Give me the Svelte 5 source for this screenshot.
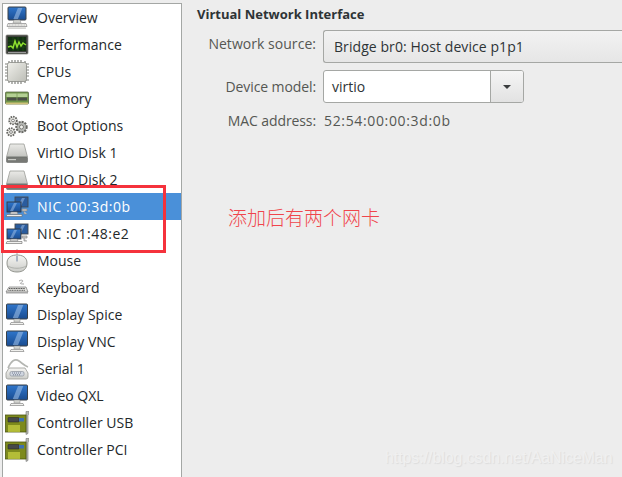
<script>
  const items = [
    ['Overview', 'overview'], ['Performance', 'perf'], ['CPUs', 'cpu'], ['Memory', 'mem'],
    ['Boot Options', 'gears'], ['VirtIO Disk 1', 'disk'], ['VirtIO Disk 2', 'disk'],
    ['NIC :00:3d:0b', 'nic'], ['NIC :01:48:e2', 'nic'], ['Mouse', 'mouse'], ['Keyboard', 'kbd'],
    ['Display Spice', 'display'], ['Display VNC', 'display'], ['Serial 1', 'serial'],
    ['Video QXL', 'display'], ['Controller USB', 'card'], ['Controller PCI', 'card']
  ];
</script>

{#snippet screen(x, y, w, h)}
  <rect x={x} y={y} width={w} height={h} rx="1" fill="url(#scr)" stroke="#3a4046" stroke-width="1"/>
  <path d="M{x + w * 0.3} {y + h - 1} L{x + w * 0.55} {y + 1} H{x + w * 0.8} L{x + w * 0.55} {y + h - 1} Z" fill="#a6c4ea" opacity="0.55"/>
{/snippet}

{#snippet icon(kind)}
  <svg class="ico" viewBox="0 0 24 24" width="24" height="24">
    {#if kind === 'overview'}
      {@render screen(3, 1, 18, 13)}
      <path d="M9 14h6l1 3H8z" fill="#d4d5d1" stroke="#888" stroke-width=".5"/>
      <path d="M3 17.5h18l1 3H2z" fill="#eeeeeb" stroke="#777" stroke-width=".6"/>
      <path d="M4 19h16" stroke="#888" stroke-width=".5" stroke-dasharray="1 .5"/>
      <rect x="3" y="21.5" width="18" height="1.2" fill="#c4c4c0"/>
    {:else if kind === 'perf'}
      <rect x="1" y="2" width="22" height="19" rx="1" fill="#3c3f3a" stroke="#8a8c86" stroke-width=".8"/>
      <rect x="3" y="4" width="18" height="14" fill="#123012"/>
      <path d="M3 8h18M3 11h18M3 14h18M8 4v14M13 4v14M18 4v14" stroke="#2c5a1c" stroke-width=".5"/>
      <path d="M3 14l3-1 2 2 2-7 2 6 2-5 2 4 2-3 3 2" fill="none" stroke="#8ee02e" stroke-width="1.5"/>
      <rect x="3" y="19" width="18" height="1" fill="#999"/>
    {:else if kind === 'cpu'}
      <path d="M4 1v22M7 0v24M10 0v24M13 0v24M16 0v24M20 1v22M0 4h24M0 7h24M0 10h24M0 13h24M0 16h24M0 20h24" stroke="#80827d" stroke-width="1.2"/>
      <rect x="2.5" y="2.5" width="19" height="19" rx="2" fill="url(#chip)" stroke="#8a8c86" stroke-width=".8"/>
    {:else if kind === 'mem'}
      <rect x="0.5" y="5" width="23" height="12" rx="1" fill="#6f9448" stroke="#5a6a48" stroke-width=".8"/>
      <rect x="1.5" y="6.5" width="21" height="3.5" fill="#b4d094"/>
      <rect x="2" y="10.5" width="20" height="3" fill="#4a4e46"/>
      <path d="M12 6v8" stroke="#7fa05a" stroke-width=".8"/>
      <rect x="1" y="15.5" width="22" height="1.8" fill="#cfc27a"/>
    {:else if kind === 'gears'}
      <g fill="#ecece8" stroke="#666662">
        <circle cx="8" cy="6.5" r="3.8" stroke-dasharray="1.6 .9" stroke-width="1.8"/>
        <circle cx="8" cy="6.5" r="1.4" fill="#fff" stroke-width=".8"/>
        <circle cx="6" cy="18" r="3.8" stroke-dasharray="1.6 .9" stroke-width="1.8"/>
        <circle cx="6" cy="18" r="1.4" fill="#fff" stroke-width=".8"/>
        <circle cx="16.5" cy="13" r="5.2" fill="#b8bab6" stroke-dasharray="2 1" stroke-width="2"/>
        <circle cx="16.5" cy="13" r="2" fill="#f2f2ee" stroke-width=".8"/>
      </g>
    {:else if kind === 'disk'}
      <path d="M5 3h14l3.5 13H1.5z" fill="url(#diskg)" stroke="#9a9c97" stroke-width=".8"/>
      <rect x="1.5" y="16" width="21" height="5.5" rx="1" fill="#777975" stroke="#666864" stroke-width=".6"/>
      <rect x="3" y="18" width="8" height="1.2" fill="#c9cbc6"/>
    {:else if kind === 'nic'}
      <rect x="10" y="2" width="13" height="10" fill="#2a5c9e" stroke="#444a50" stroke-width=".9"/>
      <path d="M13 11 17 3h3l-4 8z" fill="#a6c4ea" opacity=".5"/>
      <rect x="2" y="7" width="14" height="10" fill="url(#scr)" stroke="#33393f" stroke-width=".9"/>
      <path d="M5 16l4-8h3l-4 8z" fill="#a6c4ea" opacity=".5"/>
      <path d="M6 17h6l1 2H5z" fill="#ddd" stroke="#777" stroke-width=".5"/>
      <path d="M2 19.5h15v2H1z" fill="#f0f0ee" stroke="#666" stroke-width=".6"/>
      <path d="M17 14h5v2h-5zM19 16v3h3" fill="#ccc" stroke="#888" stroke-width=".7"/>
    {:else if kind === 'mouse'}
      <path d="M12 0v6" stroke="#aaa" stroke-width="1"/>
      <path d="M2 14C2 8 7 6 12 6s10 2 10 8-4 9-10 9S2 20 2 14z" fill="url(#mouseg)" stroke="#8a8c86" stroke-width=".9"/>
      <path d="M3 17c4 3 14 3 18 0" fill="none" stroke="#a5a7a2" stroke-width=".8"/>
      <path d="M11 7h2v5l-1 1-1-1z" fill="#a9b4c4"/>
    {:else if kind === 'kbd'}
      <path d="M14 5c3-2 5 0 3 1s-3 2 2 2" fill="none" stroke="#999" stroke-width=".9"/>
      <path d="M4 11h17l2 5H1z" fill="#e4e4e0" stroke="#777" stroke-width=".7"/>
      <path d="M4 12.5h16M3.4 14.3h17" stroke="#5a5a5a" stroke-width="1" stroke-dasharray="1.2 .5"/>
      <rect x="1" y="16" width="22" height="1.5" fill="#a8a8a8"/>
    {:else if kind === 'display'}
      {@render screen(1.5, 1, 21, 15)}
      <path d="M9 16h6v3H9z" fill="#d4d5d1" stroke="#888" stroke-width=".5"/>
      <path d="M6 19.5h12l1 2H5z" fill="#f0f0ed" stroke="#777" stroke-width=".6"/>
    {:else if kind === 'serial'}
      <path d="M3 11C6 4 10 1 14 4s6 5 9 6" fill="none" stroke="#b4b6b2" stroke-width="1.6"/>
      <path d="M4 11h16l3 5v4a2 2 0 0 1-2 2H3a2 2 0 0 1-2-2v-4z" fill="url(#mouseg)" stroke="#999b96" stroke-width=".8"/>
      <rect x="5" y="14.5" width="14" height="4.5" rx="1.5" fill="#d0d6e0" stroke="#8b929c" stroke-width=".7"/>
      <path d="M7 16h10M8 17.8h8" stroke="#6a7588" stroke-width=".9" stroke-dasharray="1 1"/>
    {:else if kind === 'card'}
      <path d="M21 .5h3v3l-1 1v18l-2 1z" fill="#b9bbb6" stroke="#777" stroke-width=".6"/>
      <rect x="0.5" y="4" width="20.5" height="17" fill="#7d8a1d" stroke="#4d5612" stroke-width=".8"/>
      <rect x="3" y="6.5" width="11" height="4.5" rx=".5" fill="#45484a" stroke="#222" stroke-width=".5"/>
      <rect x="14" y="7" width="5" height="3.5" fill="#3d6fb0"/>
      <path d="M4 14v7M6 14v7M8 14v7M10 14v7M12 14v7M14 14v7" stroke="#d9e04a" stroke-width="1.2"/>
    {/if}
  </svg>
{/snippet}

<svg class="defs" aria-hidden="true">
  <defs>
    <linearGradient id="scr" x1="0" y1="0" x2="0" y2="1"><stop offset="0" stop-color="#2f76cc"/><stop offset="1" stop-color="#1a4c90"/></linearGradient>
    <linearGradient id="chip" x1="0" y1="0" x2="1" y2="1"><stop offset="0" stop-color="#f0f0eb"/><stop offset="1" stop-color="#bcbdb6"/></linearGradient>
    <linearGradient id="diskg" x1="0" y1="0" x2="0" y2="1"><stop offset="0" stop-color="#eaeae7"/><stop offset="1" stop-color="#c2c3bf"/></linearGradient>
    <linearGradient id="mouseg" x1="0" y1="0" x2="0" y2="1"><stop offset="0" stop-color="#f6f6f4"/><stop offset="1" stop-color="#cbccc8"/></linearGradient>
  </defs>
</svg>

<div class="page">
  <aside class="side">
    {#each items as [label, kind], i}
      <div class="row" class:sel={i === 7} class:nic={kind === 'nic'}>
        {@render icon(kind)}
        <span>{label}</span>
      </div>
    {/each}
  </aside>
  <main class="detail">
    <h1>Virtual Network Interface</h1>
    <div class="form">
      <label class="src" for="src">Network source:</label>
      <div id="src" class="combo wide">Bridge br0: Host device p1p1</div>
      <label class="model" for="model">Device model:</label>
      <div id="model" class="entry">
        <span class="val">virtio</span>
        <span class="btn"><i></i></span>
      </div>
      <span class="lab">MAC address:</span>
      <span class="mac">52:54:00:00:3d:0b</span>
    </div>
  </main>
</div>

<div class="redbox"></div>
<div class="note">添加后有两个网卡</div>
<div class="mark">https://blog.csdn.net/AaNiceMan</div>

<style>
  :global(body) { margin: 0; background: #ededed; }
  .defs { position: absolute; width: 0; height: 0; }
  .page {
    width: 622px; height: 477px; overflow: hidden; display: flex; align-items: stretch;
    box-sizing: border-box; padding: 3px 0 0 2px;
    background: #ededed; color: #2e3436;
    font: 14px "Open Sans", "Noto Sans", sans-serif;
  }
  .side {
    width: 180px; flex: none; box-sizing: border-box; height: 480px;
    background: #fff; border: 1px solid #a4a7a5;
  }
  .row { height: 27px; display: flex; align-items: center; gap: 8px; padding-left: 2px; }
  .row span { color: #23282a; }
  .row.nic span { letter-spacing: .5px; }
  .row.sel { background: #4a90d9; }
  .row.sel span { color: #fff; }
  .ico { flex: none; }
  .detail { flex: 1; min-width: 0; padding: 4px 0 0 15px; }
  h1 { margin: 0 0 8px; font-size: 13px; font-weight: 700; line-height: 15px; color: #2e3436; }
  .form {
    display: grid; grid-template-columns: 119px 1fr; column-gap: 7px; row-gap: 7px; align-items: center;
  }
  label, .lab { text-align: right; color: #555753; font-size: 14px; line-height: 17px; }
  .src { margin-top: -7px; letter-spacing: .04px; }
  .model { margin-top: 0; letter-spacing: -.1px; }
  .combo {
    height: 33px; box-sizing: border-box; margin-right: -30px;
    border: 1px solid #a5a7a4; border-radius: 3px 0 0 3px; border-right: 0;
    background: linear-gradient(#f2f2f2, #e6e6e6);
    padding: 0 10px; display: flex; align-items: center; color: #2e3436; letter-spacing: .07px;
  }
  .entry {
    width: 201px; height: 33px; box-sizing: border-box; display: flex;
    border: 1px solid #a5a7a4; border-radius: 3px; background: #fff; overflow: hidden;
  }
  .val { flex: 1; padding-left: 8px; line-height: 31px; color: #2e3436; }
  .btn {
    width: 32px; border-left: 1px solid #a5a7a4; background: linear-gradient(#f5f5f5, #e2e2e2);
    display: flex; align-items: center; justify-content: center;
  }
  .btn i { width: 0; height: 0; border: 4px solid transparent; border-top: 4.5px solid #3a3d3e; border-bottom: 0; }
  .lab { margin-top: 2px; letter-spacing: -.1px; }
  .mac { margin: 2px 0 0 1px; color: #555753; line-height: 17px; letter-spacing: .65px; }
  .redbox {
    position: absolute; left: 1px; top: 185px; width: 159px; height: 62px;
    border: 3px solid #f5323c;
  }
  .note {
    position: absolute; left: 228px; top: 204px; font: 300 19px/26px "Noto Sans CJK SC", sans-serif;
    color: #f0454c; white-space: nowrap;
  }
  .mark {
    position: absolute; left: 385px; top: 448px; font: 15.8px/20px "Liberation Sans", sans-serif;
    color: #f0f0f0; text-shadow: 1px 1px 1px #dcdcdc; white-space: nowrap;
  }
</style>
